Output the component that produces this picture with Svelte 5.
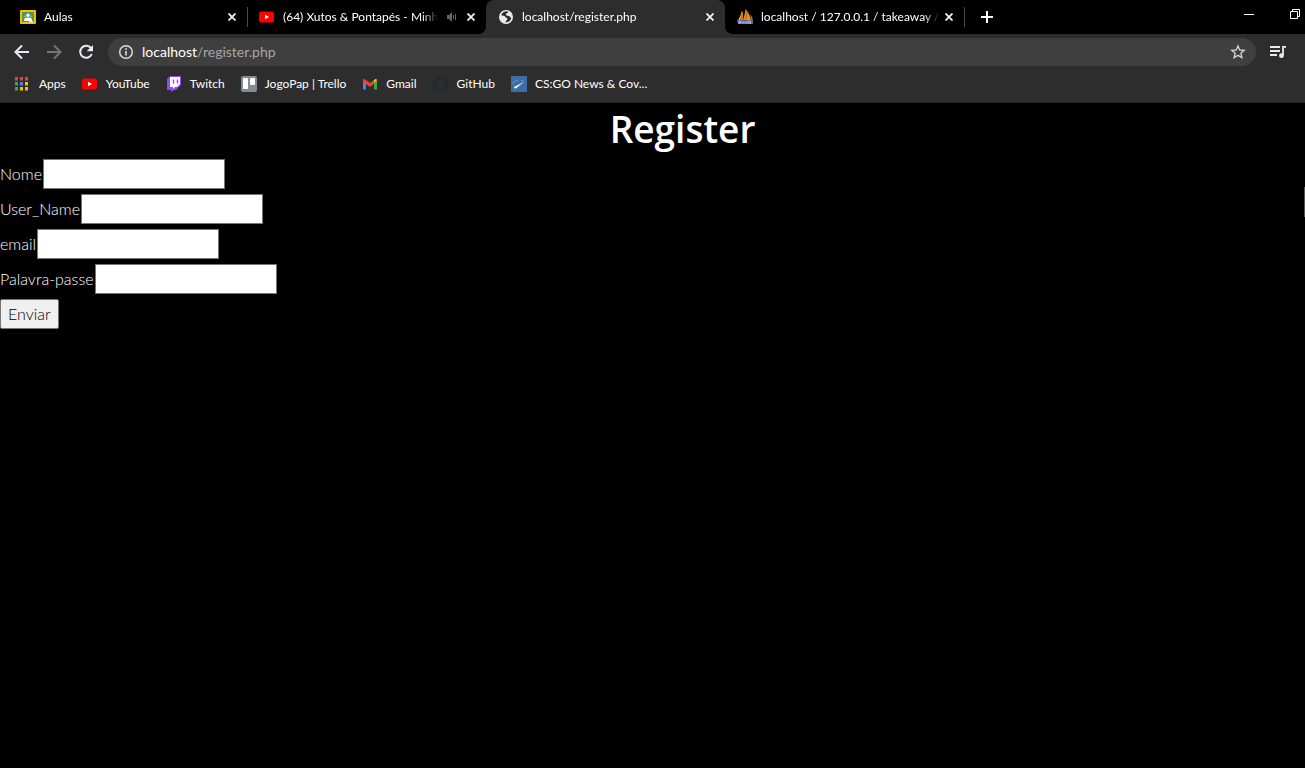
<script>
  const tabs = [
    { title: 'Aulas', icon: 'classroom' },
    { title: '(64) Xutos & Pontapés - Minh', icon: 'youtube', audio: true },
    { title: 'localhost/register.php', icon: 'globe', active: true },
    { title: 'localhost / 127.0.0.1 / takeaway /', icon: 'phpmyadmin' },
  ];

  const bookmarks = [
    { title: 'Apps', icon: 'apps' },
    { title: 'YouTube', icon: 'youtube' },
    { title: 'Twitch', icon: 'twitch' },
    { title: 'JogoPap | Trello', icon: 'trello' },
    { title: 'Gmail', icon: 'gmail' },
    { title: 'GitHub', icon: 'github' },
    { title: 'CS:GO News & Cov...', icon: 'csgo' },
  ];

  const fields = [
    { id: 'nome', label: 'Nome', type: 'text' },
    { id: 'username', label: 'User_Name', type: 'text' },
    { id: 'email', label: 'email', type: 'text' },
    { id: 'password', label: 'Palavra-passe', type: 'password' },
  ];

  const appColors = ['#ea4335', '#ea4335', '#ea4335', '#34a853', '#4285f4', '#fbbc05', '#34a853', '#fbbc05', '#fbbc05'];
</script>

{#snippet icon(name)}
  <svg class="icon" viewBox="0 0 16 16" width="16" height="16" aria-hidden="true">
    {#if name === 'classroom'}
      <rect x="0" y="1" width="16" height="14" rx="1" fill="#fbbc05" />
      <rect x="2" y="3" width="12" height="10" fill="#4c9a5c" />
      <circle cx="8" cy="6.2" r="1.7" fill="#fff" />
      <circle cx="5" cy="7.4" r="1" fill="#7fc093" />
      <circle cx="11" cy="7.4" r="1" fill="#7fc093" />
      <path d="M4 12v-1c0-1.600 2-2.400 4-2.400s4 .8 4 2.400v1z" fill="#fff" />
      <rect x="9" y="12" width="4" height="1.400" fill="#e6f4ea" />
    {:else if name === 'youtube'}
      <rect x="0" y="2.500" width="15" height="11" rx="2.500" fill="#f00" />
      <path d="M6 5.700v4.600L10 8z" fill="#fff" />
    {:else if name === 'globe'}
      <circle cx="8" cy="8" r="7" fill="#e8eaed" />
      <path d="M8.500 2.300C5 2.500 3.300 4.800 3.500 6.200c1.500.8 3 .3 3.700 1.500.6 1.200 2.300 1 2.200 2.400-.1 1.300-1.500 1.500-1.900 3.200 2.800.2 5.200-1.700 5.700-4.400-1.200-.3-1.100-1.700-2.600-1.800-1.800-.1-2.900-.9-2.700-2 .2-1.200 2.300-.7 2.300-1.800 0-.5-.7-.9-1.700-1z" fill="#2d2d2d" />
      <path d="M2.500 8.200c1 .2 2 .9 2.500 1.900.4.800 1 .8 1 1.700v1.400C3.800 12.300 2.500 10.400 2.500 8.200z" fill="#e8eaed" />
    {:else if name === 'phpmyadmin'}
      <path d="M1 11C3 8 4 5 5 1.500 6.200 4.500 6.300 8 5.500 11z" fill="#f3a13c" />
      <path d="M6 11C7.300 7.500 8 4 8.500 0c3 3.500 5 7.300 5.500 11z" fill="#f29111" />
      <path d="M8 11c1.500-2.500 2-5 1.800-8M3.500 11c1-2 1.500-4 1.300-6" stroke="#8d5212" stroke-width=".8" fill="none" />
      <path d="M13.500 5.500c1.500 1.500 2 3 2.100 5.500h-1.300z" fill="#b97b32" />
      <path d="M0 11h16v4H1z" fill="#62679b" />
      <path d="M2 15v-2.500h2V14H2M6 15v-2.500l1.500 1.500L9 12.500V15M11 15v-2.500h2.500V15M11 14h2.500" stroke="#c2c4dc" stroke-width=".8" fill="none" />
    {:else if name === 'apps'}
      {#each appColors as color, i}
        <rect x={(i % 3) * 5} y={1 + Math.floor(i / 3) * 5} width="3" height="3" fill={color} />
        <rect x={(i % 3) * 5} y={4 + Math.floor(i / 3) * 5} width="3" height="1" fill={color} opacity=".5" />
      {/each}
    {:else if name === 'twitch'}
      <path d="M1 3l3-3h11v9l-5 5H8l-3 2v-2H1z" fill="#9146ff" />
      <path d="M4 1h10v7l-3 3H9l-2 2v-2H4z" fill="#fff" />
      <path d="M7.500 3.500v4M11.500 3.500v4" stroke="#9146ff" stroke-width="1.400" />
    {:else if name === 'trello'}
      <rect width="16" height="16" rx="2" fill="#838c91" />
      <rect x="2" y="2" width="5" height="11" rx="1" fill="#fff" />
      <rect x="9" y="2" width="5" height="7" rx="1" fill="#fff" />
    {:else if name === 'gmail'}
      <path d="M1 13.500V4.500l3 2.300v6.700z" fill="#4285f4" />
      <path d="M12 13.500V6.800l3-2.300v9z" fill="#34a853" />
      <path d="M12 4l1-.8c1-.6 2 0 2 1.300l-3 2.500z" fill="#fbbc04" />
      <path d="M1 4.500c0-1.300 1-1.900 2-1.300L8 7l4-3v4l-4 3-4-3-3-2.200z" fill="#ea4335" />
    {:else if name === 'github'}
      <path fill="#24292e" d="M8 0C3.580 0 0 3.580 0 8c0 3.540 2.290 6.530 5.470 7.590.4.070.55-.17.55-.38 0-.19-.01-.82-.01-1.490-2.010.37-2.530-.49-2.690-.94-.09-.23-.48-.94-.82-1.130-.28-.15-.68-.52-.01-.53.63-.01 1.080.58 1.230.82.72 1.210 1.870.87 2.330.66.07-.52.28-.87.51-1.070-1.780-.2-3.640-.89-3.640-3.950 0-.87.31-1.590.82-2.150-.08-.2-.36-1.020.08-2.120 0 0 .67-.21 2.200.82.64-.18 1.320-.27 2-.27s1.360.09 2 .27c1.530-1.040 2.200-.82 2.200-.82.44 1.100.16 1.920.08 2.120.51.56.82 1.270.82 2.150 0 3.070-1.870 3.750-3.650 3.950.29.25.54.73.54 1.480 0 1.070-.01 1.930-.01 2.200 0 .21.15.46.55.38A8.010 8.010 0 0 0 16 8c0-4.420-3.580-8-8-8z" />
    {:else if name === 'csgo'}
      <rect width="16" height="16" fill="#3c6ea5" />
      <path d="M3 12c0-1 .8-1.800 2-2l8.500-4.500L6.500 11c-.5 1.200-2 2-3.500 1z" fill="#fff" />
      <path d="M2 7.500C3 5.500 5 4 8 4" stroke="#86a7ca" stroke-width="1" stroke-dasharray="1.500 1" fill="none" />
      <path d="M10 4.500h2" stroke="#86a7ca" stroke-width=".8" />
    {/if}
  </svg>
{/snippet}

<div class="window">
  <header>
    <div class="tabstrip">
      {#each tabs as tab}
        <div class="tab" class:active={tab.active}>
          {@render icon(tab.icon)}
          <span class="title">{tab.title}</span>
          {#if tab.audio}
            <svg class="audio" viewBox="0 0 12 12" width="12" height="12" aria-hidden="true">
              <path d="M1 4h2l3-3v10L3 8H1z" fill="#606265" />
              <path d="M7.500 4v4M9.500 3v6" stroke="#606265" fill="none" />
            </svg>
          {/if}
          <button class="close" aria-label="Close tab">
            <svg viewBox="0 0 8 8" width="8" height="8"><path d="M.5 .5l7 7M7.500 .5l-7 7" stroke="#f1f3f4" stroke-width="1.800" /></svg>
          </button>
        </div>
      {/each}
      <button class="new-tab" aria-label="New tab">
        <svg viewBox="0 0 12 12" width="12" height="12"><path d="M6 0v12M0 6h12" stroke="#fff" stroke-width="2" /></svg>
      </button>
      <div class="controls">
        <button aria-label="Minimize">
          <svg viewBox="0 0 10 10" width="10" height="10"><path d="M0 5.500h10" stroke="#fff" /></svg>
        </button>
        <button aria-label="Restore">
          <svg viewBox="0 0 10 10" width="10" height="10"><path d="M.5 2.500h7v7h-7zM2.500 2.500v-2h7v7h-2" stroke="#fff" fill="none" /></svg>
        </button>
      </div>
    </div>

    <div class="toolbar">
      <button aria-label="Back">
        <svg viewBox="0 0 16 16" width="16" height="16"><path d="M15 8H2M8 1.500L1.500 8 8 14.500" stroke="#e8eaed" stroke-width="2" fill="none" /></svg>
      </button>
      <button aria-label="Forward">
        <svg viewBox="0 0 16 16" width="16" height="16"><path d="M1 8h13M8 1.500L14.500 8 8 14.500" stroke="#757575" stroke-width="2" fill="none" /></svg>
      </button>
      <button aria-label="Reload">
        <svg viewBox="0 0 16 16" width="16" height="16">
          <path d="M13 4.200A6 6 0 1 0 13.800 10" stroke="#e8eaed" stroke-width="2" fill="none" />
          <path d="M15 1v6.300H8.700z" fill="#e8eaed" />
        </svg>
      </button>
      <div class="omnibox">
        <svg viewBox="0 0 16 16" width="16" height="16" aria-hidden="true">
          <circle cx="8" cy="8" r="6.300" stroke="#dcdddf" stroke-width="1.500" fill="none" />
          <path d="M8 7v4.500M8 4.300V6" stroke="#dcdddf" stroke-width="1.600" />
        </svg>
        <span class="url"><b>localhost</b>/register.php</span>
        <button aria-label="Bookmark this page">
          <svg viewBox="0 0 16 16" width="16" height="16"><path d="M8 2l1.800 4 4.400.4-3.300 2.900 1 4.300L8 11.300l-3.900 2.300 1-4.300L1.800 6.400 6.200 6z" stroke="#cfd0d2" stroke-width="1.400" fill="none" /></svg>
        </button>
      </div>
      <button aria-label="Media controls">
        <svg viewBox="0 0 16 16" width="16" height="16">
          <path d="M0 3h10M0 7h10M0 11h7" stroke="#e8eaed" stroke-width="1.800" />
          <path d="M16 2.800h-3V11" stroke="#e8eaed" stroke-width="1.800" fill="none" />
          <circle cx="11.500" cy="11.700" r="2.400" fill="#e8eaed" />
        </svg>
      </button>
    </div>

    <nav class="bookmarks">
      {#each bookmarks as bookmark}
        <a href="#{bookmark.icon}">{@render icon(bookmark.icon)}<span>{bookmark.title}</span></a>
      {/each}
    </nav>
  </header>

  <main>
    <h1>Register</h1>
    <form onsubmit={(event) => event.preventDefault()}>
      {#each fields as field}
        <div class="row">
          <label for={field.id}>{field.label}</label><input id={field.id} type={field.type} />
        </div>
      {/each}
      <div class="row"><button class="submit" type="submit">Enviar</button></div>
    </form>
    <span class="scroll-edge"></span>
  </main>
</div>

<style>
  :global(body) {
    margin: 0;
    background: #000;
  }

  .window {
    min-height: 100vh;
    display: flex;
    flex-direction: column;
    overflow: hidden;
    color: #fff;
    background: #000;
    font-family: Lato, 'Segoe UI', sans-serif;
    font-size: 12px;
  }

  button {
    margin: 0;
    padding: 0;
    border: 0;
    background: none;
    color: inherit;
    font: inherit;
  }

  svg {
    display: block;
    flex: none;
  }

  header {
    background: #2d2d2d;
    border-bottom: 1px solid #202020;
  }

  .tabstrip {
    display: flex;
    align-items: center;
    height: 34px;
    padding-left: 8px;
    background: #000;
  }

  .tab {
    position: relative;
    display: flex;
    align-items: center;
    box-sizing: border-box;
    flex: 0 1 239px;
    min-width: 0;
    height: 34px;
    padding: 0 10px 0 12px;
  }

  .tab::after {
    content: '';
    position: absolute;
    right: -1px;
    top: 7px;
    width: 1px;
    height: 20px;
    background: #4b4c4f;
  }

  .tab:has(+ .active)::after {
    display: none;
  }

  .tab.active {
    background: #2d2d2d;
    border-radius: 8px 8px 0 0;
  }

  .tab.active::before,
  .tab.active::after {
    content: '';
    position: absolute;
    top: auto;
    bottom: 0;
    width: 8px;
    height: 8px;
  }

  .tab.active::before {
    left: -8px;
    background: radial-gradient(circle at 0 0, #000 8px, #2d2d2d 8px);
  }

  .tab.active::after {
    right: -8px;
    background: radial-gradient(circle at 100% 0, #000 8px, #2d2d2d 8px);
  }

  .title {
    flex: 1;
    min-width: 0;
    margin: 0 4px 0 8px;
    overflow: hidden;
    white-space: nowrap;
    line-height: 18px;
    mask-image: linear-gradient(to left, transparent, #000 16px);
  }

  .audio {
    margin: 0 8px 0 4px;
  }

  .close {
    display: grid;
    place-items: center;
    width: 10px;
    height: 16px;
  }

  .new-tab {
    margin-left: 17px;
  }

  .controls {
    display: flex;
    gap: 36px;
    margin-left: auto;
    padding: 0 5px 6px 0;
  }

  .toolbar {
    display: flex;
    align-items: center;
    gap: 16px;
    padding: 4px 19px 4px 14px;
  }

  .omnibox {
    display: flex;
    align-items: center;
    flex: 1;
    height: 28px;
    margin: 0 -2px;
    padding: 0 10px;
    gap: 8px;
    border-radius: 14px;
    background: #3f3f3f;
    font-size: 14px;
  }

  .url {
    flex: 1;
    padding-bottom: 2px;
    color: #a5a6a8;
  }

  .url b {
    color: #fff;
    font-weight: 400;
  }

  .bookmarks {
    display: flex;
    gap: 16px;
    height: 32px;
    padding-left: 15px;
    align-items: flex-start;
  }

  .bookmarks a {
    display: flex;
    align-items: center;
    gap: 8px;
    height: 28px;
    color: #fff;
    text-decoration: none;
    white-space: nowrap;
  }

  .bookmarks span,
  .row label {
    padding-bottom: 2px;
  }

  main {
    position: relative;
    flex: 1;
  }

  h1 {
    margin: 0 0 5px 60px;
    font-family: 'Open Sans', 'Segoe UI', sans-serif;
    font-size: 37px;
    font-weight: 600;
    line-height: 51px;
    text-align: center;
  }

  form {
    display: flex;
    flex-direction: column;
    gap: 5px;
    font-size: 16px;
    font-weight: 300;
  }

  .row {
    display: flex;
    align-items: center;
    gap: 1px;
  }

  .row input {
    box-sizing: border-box;
    width: 182px;
    height: 30px;
    padding: 1px 2px;
    border: 1px solid #767676;
    border-radius: 0;
    background: #fff;
    font: inherit;
  }

  .submit {
    height: 30px;
    padding: 0 7px 2px;
    border: 1px solid #767676;
    border-radius: 2px;
    background: #efefef;
    color: #000;
  }

  .scroll-edge {
    position: absolute;
    top: 84px;
    right: 0;
    width: 1px;
    height: 30px;
    background: #555;
  }
</style>
